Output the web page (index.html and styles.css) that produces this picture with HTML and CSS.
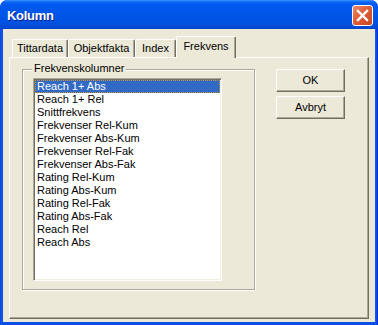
FILE: index.html
```html
<!DOCTYPE html>
<html>
<head>
<meta charset="utf-8">
<link rel="stylesheet" href="styles.css">
</head>
<body>
<div class="window">
  <div class="titlebar">
    <span class="title">Kolumn</span>
    <div class="close">
      <svg width="21" height="21" viewBox="0 0 21 21"><path d="M6 6 L15 15 M15 6 L6 15" stroke="#fff" stroke-width="2.4" stroke-linecap="square" fill="none"/></svg>
    </div>
  </div>
  <div class="client">
    <div class="tabs">
      <div class="tab t1">Tittardata</div>
      <div class="tab t2">Objektfakta</div>
      <div class="tab t3">Index</div>
      <div class="tab t4 active">Frekvens</div>
    </div>
    <div class="panel">
      <div class="group">
        <div class="legend">Frekvenskolumner</div>
        <ul class="list">
          <li class="item selected">Reach 1+ Abs</li>
          <li class="item">Reach 1+ Rel</li>
          <li class="item">Snittfrekvens</li>
          <li class="item">Frekvenser Rel-Kum</li>
          <li class="item">Frekvenser Abs-Kum</li>
          <li class="item">Frekvenser Rel-Fak</li>
          <li class="item">Frekvenser Abs-Fak</li>
          <li class="item">Rating Rel-Kum</li>
          <li class="item">Rating Abs-Kum</li>
          <li class="item">Rating Rel-Fak</li>
          <li class="item">Rating Abs-Fak</li>
          <li class="item">Reach Rel</li>
          <li class="item">Reach Abs</li>
        </ul>
      </div>
      <div class="buttons">
        <div class="btn">OK</div>
        <div class="btn btn-second">Avbryt</div>
      </div>
    </div>
  </div>
</div>
</body>
</html>
```

FILE: styles.css
```css
html, body {
  margin: 0;
  padding: 0;
  background: #ffffff;
}
body {
  font-family: "Liberation Sans", Arial, sans-serif;
  font-size: 11px;
  color: #000;
}
.window {
  width: 378px;
  height: 325px;
  box-sizing: border-box;
  border-radius: 7px 7px 0 0;
  background: linear-gradient(to right, #0831d9 0, #1660f0 1px, #0a50e4 2px, #0a50e4 375px, #1660f0 376px, #0831d9 377px);
  display: flex;
  flex-direction: column;
  overflow: hidden;
}
.titlebar {
  height: 29px;
  flex: none;
  display: flex;
  align-items: flex-start;
  justify-content: space-between;
  padding: 0 5px 0 7px;
  background: linear-gradient(to bottom, #3d95ff 0, #0a66f5 2px, #0058ee 5px, #0056e8 14px, #0052e2 22px, #004bd6 27px, #0044c8 29px);
  border-radius: 7px 7px 0 0;
}
.title {
  color: #fff;
  font-weight: bold;
  font-size: 13px;
  letter-spacing: -0.3px;
  line-height: 15px;
  margin-top: 8px;
  text-shadow: 1px 1px 0 #0a1e8c;
}
.close {
  width: 21px;
  height: 21px;
  margin-top: 5px;
  box-sizing: border-box;
  border: 1px solid #fff;
  border-radius: 3px;
  background: linear-gradient(135deg, #eb8a6c 0%, #e0623d 40%, #c9431c 100%);
  display: flex;
  align-items: center;
  justify-content: center;
}
.close svg {
  display: block;
  margin: -1px;
}
.client {
  flex: none;
  height: 293px;
  margin: 0 3px;
  background: #ece9d8;
  display: flex;
  flex-direction: column;
}
.tabs {
  display: flex;
  align-items: flex-end;
  padding: 7px 0 0 9px;
  height: 21px;
}
.tab {
  box-sizing: border-box;
  height: 18px;
  border-top: 1px solid #fff;
  border-left: 1px solid #fff;
  border-right: 1px solid #716f64;
  box-shadow: inset -1px 0 0 #aca899;
  border-radius: 2px 2px 0 0;
  text-align: center;
  line-height: 13px;
  padding-top: 2px;
  background: #ece9d8;
}
.t1 { width: 56px; }
.t2 { width: 67px; }
.t3 { width: 41px; }
.t4 { width: 60px; }
.tab.active {
  height: 22px;
  margin-bottom: -1px;
  padding-top: 3px;
  position: relative;
  z-index: 1;
}
.panel {
  box-sizing: border-box;
  margin-left: 6px;
  width: 360px;
  height: 262px;
  border-top: 1px solid #fff;
  border-left: 1px solid #fff;
  border-right: 1px solid #716f64;
  border-bottom: 1px solid #716f64;
  box-shadow: inset -1px -1px 0 #aca899;
  padding: 11px 0 0 12px;
  display: flex;
  align-items: flex-start;
}
.group {
  position: relative;
  box-sizing: border-box;
  width: 233px;
  height: 221px;
  border: 1px solid #aca899;
  box-shadow: inset 1px 1px 0 #fff, 1px 1px 0 #fff;
  padding: 8px 0 0 10px;
}
.legend {
  position: absolute;
  top: -8px;
  left: 9px;
  padding: 0 2px;
  line-height: 13px;
  background: #ece9d8;
}
.list {
  list-style: none;
  margin: 0;
  box-sizing: border-box;
  width: 189px;
  height: 203px;
  padding: 1px;
  background: #fff;
  border-top: 1px solid #aca899;
  border-left: 1px solid #aca899;
  border-right: 1px solid #fff;
  border-bottom: 1px solid #fff;
  box-shadow: inset 1px 1px 0 #716f64, inset -1px -1px 0 #f1efe2;
}
.item {
  height: 13px;
  line-height: 13px;
  padding-left: 2px;
  white-space: nowrap;
}
.item.selected {
  background: #316ac5;
  color: #fff;
  outline: 1px dotted #ce953a;
  outline-offset: -1px;
}
.buttons {
  margin-left: 21px;
  display: flex;
  flex-direction: column;
}
.btn {
  box-sizing: border-box;
  width: 69px;
  height: 23px;
  border-top: 1px solid #fff;
  border-left: 1px solid #fff;
  border-right: 1px solid #716f64;
  border-bottom: 1px solid #716f64;
  box-shadow: inset -1px -1px 0 #aca899;
  text-align: center;
  line-height: 21px;
  background: #ece9d8;
}
.btn-second {
  margin-top: 4px;
}
```
